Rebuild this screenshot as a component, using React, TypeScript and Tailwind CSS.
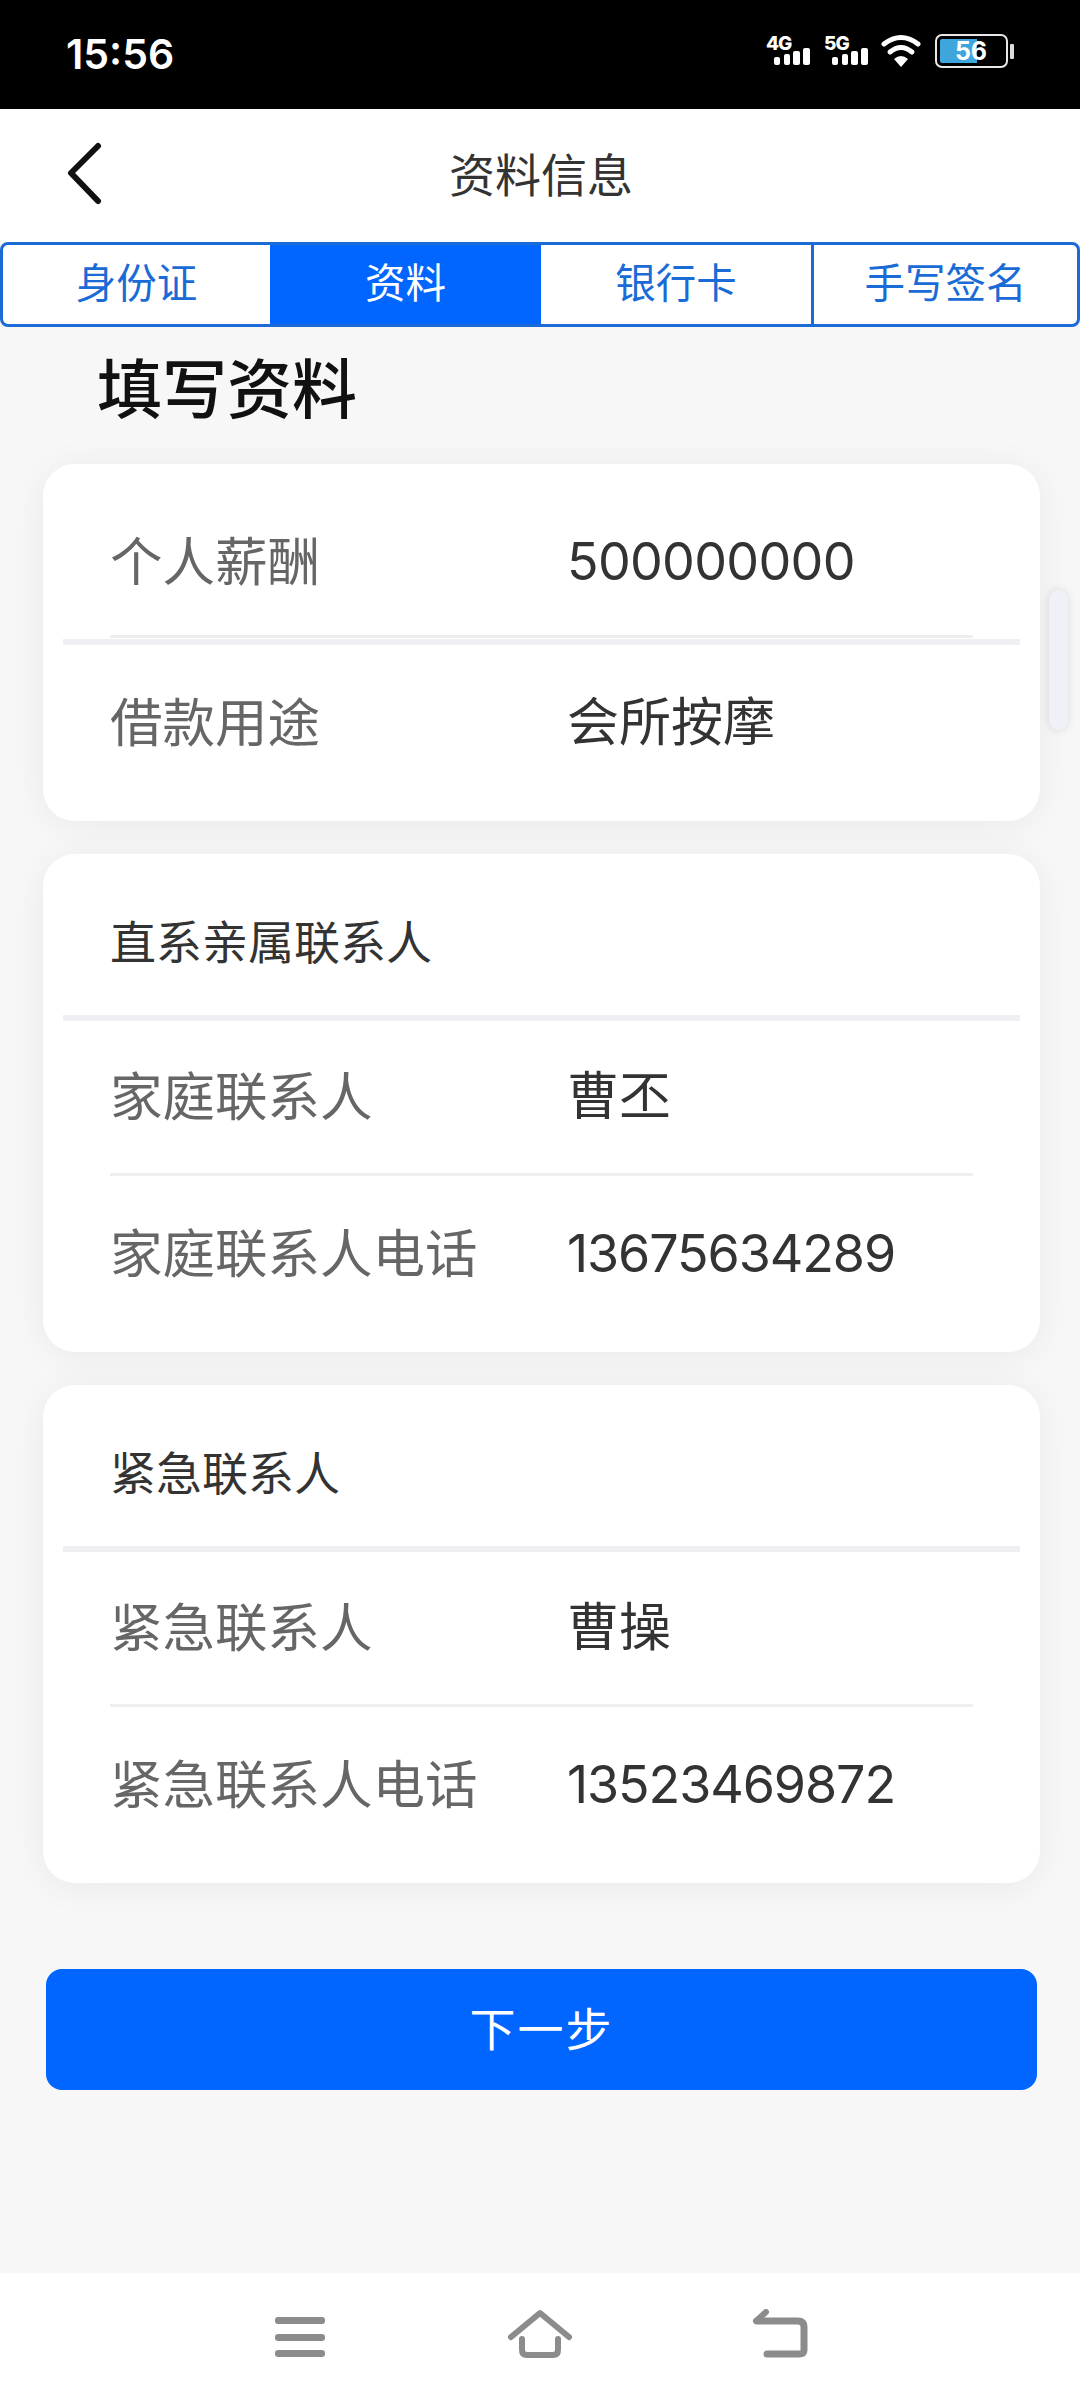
const FONT = "font-['Inter','Noto_Sans_CJK_SC',sans-serif]";

function StatusIcons() {
  return (
    <svg width="252" height="52" viewBox="0 -6 252 52" className="block">
      {/* 4G */}
      <text x="1" y="15" fill="#fff" fontSize="19" fontWeight="800" fontFamily="Inter, sans-serif" letterSpacing="-1">4G</text>
      <rect x="9" y="22" width="6" height="8" rx="2" fill="#fff" />
      <rect x="19" y="19" width="6" height="11" rx="2" fill="#fff" />
      <rect x="28" y="16" width="7" height="14" rx="2" fill="#fff" />
      <rect x="38" y="13" width="7" height="17" rx="2" fill="#fff" />
      {/* 5G */}
      <text x="59" y="15" fill="#fff" fontSize="19" fontWeight="800" fontFamily="Inter, sans-serif" letterSpacing="-1">5G</text>
      <rect x="67" y="22" width="6" height="8" rx="2" fill="#fff" />
      <rect x="77" y="19" width="6" height="11" rx="2" fill="#fff" />
      <rect x="86" y="16" width="7" height="14" rx="2" fill="#fff" />
      <rect x="96" y="13" width="7" height="17" rx="2" fill="#fff" />
      {/* wifi */}
      <path d="M119 9 Q136 -4 153 9" fill="none" stroke="#fff" strokeWidth="5" strokeLinecap="round" />
      <path d="M125 17 Q136 8 147 17" fill="none" stroke="#fff" strokeWidth="5" strokeLinecap="round" />
      <path d="M129 24 L136 32 L143 24 Q136 18 129 24 Z" fill="#fff" />
      {/* battery */}
      <rect x="171" y="0" width="71" height="32" rx="6" fill="none" stroke="#e8e8e8" strokeWidth="2" />
      <path d="M177 4 H212 V28 H177 Q175 28 175 26 V6 Q175 4 177 4 Z" fill="#3ea6dc" />
      <text x="206" y="25" textAnchor="middle" fill="#fff" fontSize="25" fontWeight="700" fontFamily="Inter, sans-serif">56</text>
      <rect x="245" y="9" width="4" height="15" rx="1" fill="#dcdcdc" />
    </svg>
  );
}

function Row({ label, value, first }: { label: string; value: string; first?: boolean }) {
  const tracking = value.length === 11 ? "tracking-[-1.1px]" : value.length === 9 ? "tracking-[-0.7px]" : "";
  return (
    <div className={`flex items-center pl-[67px] ${first ? "h-[152px]" : "h-[156px]"}`}>
      <div className="w-[457px] text-[52.5px] text-[#666]">{label}</div>
      <div className={`text-[52px] text-[#333] ${tracking}`}>{value}</div>
    </div>
  );
}

function ContactCard({
  title,
  rows,
}: {
  title: string;
  rows: { label: string; value: string }[];
}) {
  return (
    <div className="mb-[33px] ml-[43px] h-[498px] w-[997px] rounded-[32px] bg-white shadow-[0_4px_36px_rgba(0,0,0,0.06)]">
      <div className="flex h-[161px] items-center pl-[67px] pt-[15px] text-[46px] text-[#333]">{title}</div>
      <div className="ml-[20px] mr-[20px] h-[6px] bg-[#eeeef3]" />
      <Row first label={rows[0].label} value={rows[0].value} />
      <div className="ml-[67px] mr-[67px] h-[3px] bg-[#eeeef0]" />
      <Row label={rows[1].label} value={rows[1].value} />
    </div>
  );
}

export default function App() {
  return (
    <div className={`flex h-[2400px] w-[1080px] flex-col overflow-hidden bg-[#f7f7f7] ${FONT}`}>
      {/* status bar */}
      <div className="flex h-[109px] shrink-0 items-center justify-between bg-black pl-[66px] pr-[63px]">
        <span className="text-[41px] font-semibold text-white">15:56</span>
        <StatusIcons />
      </div>

      {/* header */}
      <div className="relative flex h-[133px] shrink-0 items-center justify-center bg-white pl-[2px]">
        <svg width="40" height="64" viewBox="0 0 40 64" className="absolute left-[65px] top-[33px]">
          <path d="M33 4 L6 31 L33 59" fill="none" stroke="#111" strokeWidth="6" strokeLinecap="round" strokeLinejoin="round" />
        </svg>
        <span className="text-[46px] text-[#333]">资料信息</span>
      </div>

      {/* tabs */}
      <div className="grid h-[85px] shrink-0 grid-cols-[267px_271px_270px_1fr] overflow-hidden rounded-[8px] border-[3px] border-[#1a6bd6] bg-white text-[40.5px] text-[#1a6bd6]">
        <div className="flex items-center justify-center">身份证</div>
        <div className="-my-[3px] flex items-center justify-center bg-[#0066ff] text-white">资料</div>
        <div className="flex items-center justify-center">银行卡</div>
        <div className="flex items-center justify-center border-l-[3px] border-[#1a6bd6]">手写签名</div>
      </div>

      {/* content */}
      <div className="relative flex-1">
        <div className="flex h-[137px] items-start pl-[97px] pt-[17px] text-[65px] font-medium leading-[92px] text-[#111]">
          填写资料
        </div>

        <div className="mb-[33px] ml-[43px] h-[357px] w-[997px] rounded-[32px] bg-white pt-[20px] shadow-[0_4px_36px_rgba(0,0,0,0.06)]">
          <div className="h-[155px]">
            <Row label="个人薪酬" value="500000000" />
          </div>
          <div className="relative">
            <div className="absolute -top-[4px] left-[67px] right-[67px] h-[3px] bg-[#eeeef0]" />
            <div className="mx-[20px] h-[6px] bg-[#eeeef3]" />
          </div>
          <Row label="借款用途" value="会所按摩" />
        </div>

        <ContactCard
          title="直系亲属联系人"
          rows={[
            { label: "家庭联系人", value: "曹丕" },
            { label: "家庭联系人电话", value: "13675634289" },
          ]}
        />
        <ContactCard
          title="紧急联系人"
          rows={[
            { label: "紧急联系人", value: "曹操" },
            { label: "紧急联系人电话", value: "13523469872" },
          ]}
        />

        <button className="ml-[46px] mt-[86px] flex h-[121px] w-[991px] items-center justify-center rounded-[16px] bg-[#0066ff] text-[46px] tracking-[2px] text-white">
          下一步
        </button>

        {/* scroll thumb */}
        <div className="absolute left-[1049px] top-[263px] h-[140px] w-[19px] rounded-full bg-[#f0f1f7] shadow-[0_0_8px_rgba(0,0,0,0.12)]" />
      </div>

      {/* nav bar */}
      <div className="flex h-[127px] shrink-0 items-start bg-white pl-[272px] pt-[36px]">
        <svg width="540" height="52" viewBox="0 0 540 52" className="block">
          <rect x="3" y="8" width="50" height="7" rx="3" fill="#8c8c8c" />
          <rect x="3" y="25" width="50" height="7" rx="3" fill="#8c8c8c" />
          <rect x="3" y="41" width="50" height="7" rx="3" fill="#8c8c8c" />
          <path d="M239 28 L268 4 L297 28" fill="none" stroke="#8c8c8c" strokeWidth="6" strokeLinecap="round" strokeLinejoin="round" />
          <path d="M250 30 V41 Q250 46 255 46 H281 Q286 46 286 41 V30" fill="none" stroke="#8c8c8c" strokeWidth="6" strokeLinecap="round" />
          <path d="M485 12 H526 Q532 12 532 18 V41 Q532 45 527 45 H495" fill="none" stroke="#8c8c8c" strokeWidth="7" strokeLinecap="round" />
          <path d="M484 12 L494 3" fill="none" stroke="#8c8c8c" strokeWidth="6" strokeLinecap="round" />
        </svg>
      </div>
    </div>
  );
}
